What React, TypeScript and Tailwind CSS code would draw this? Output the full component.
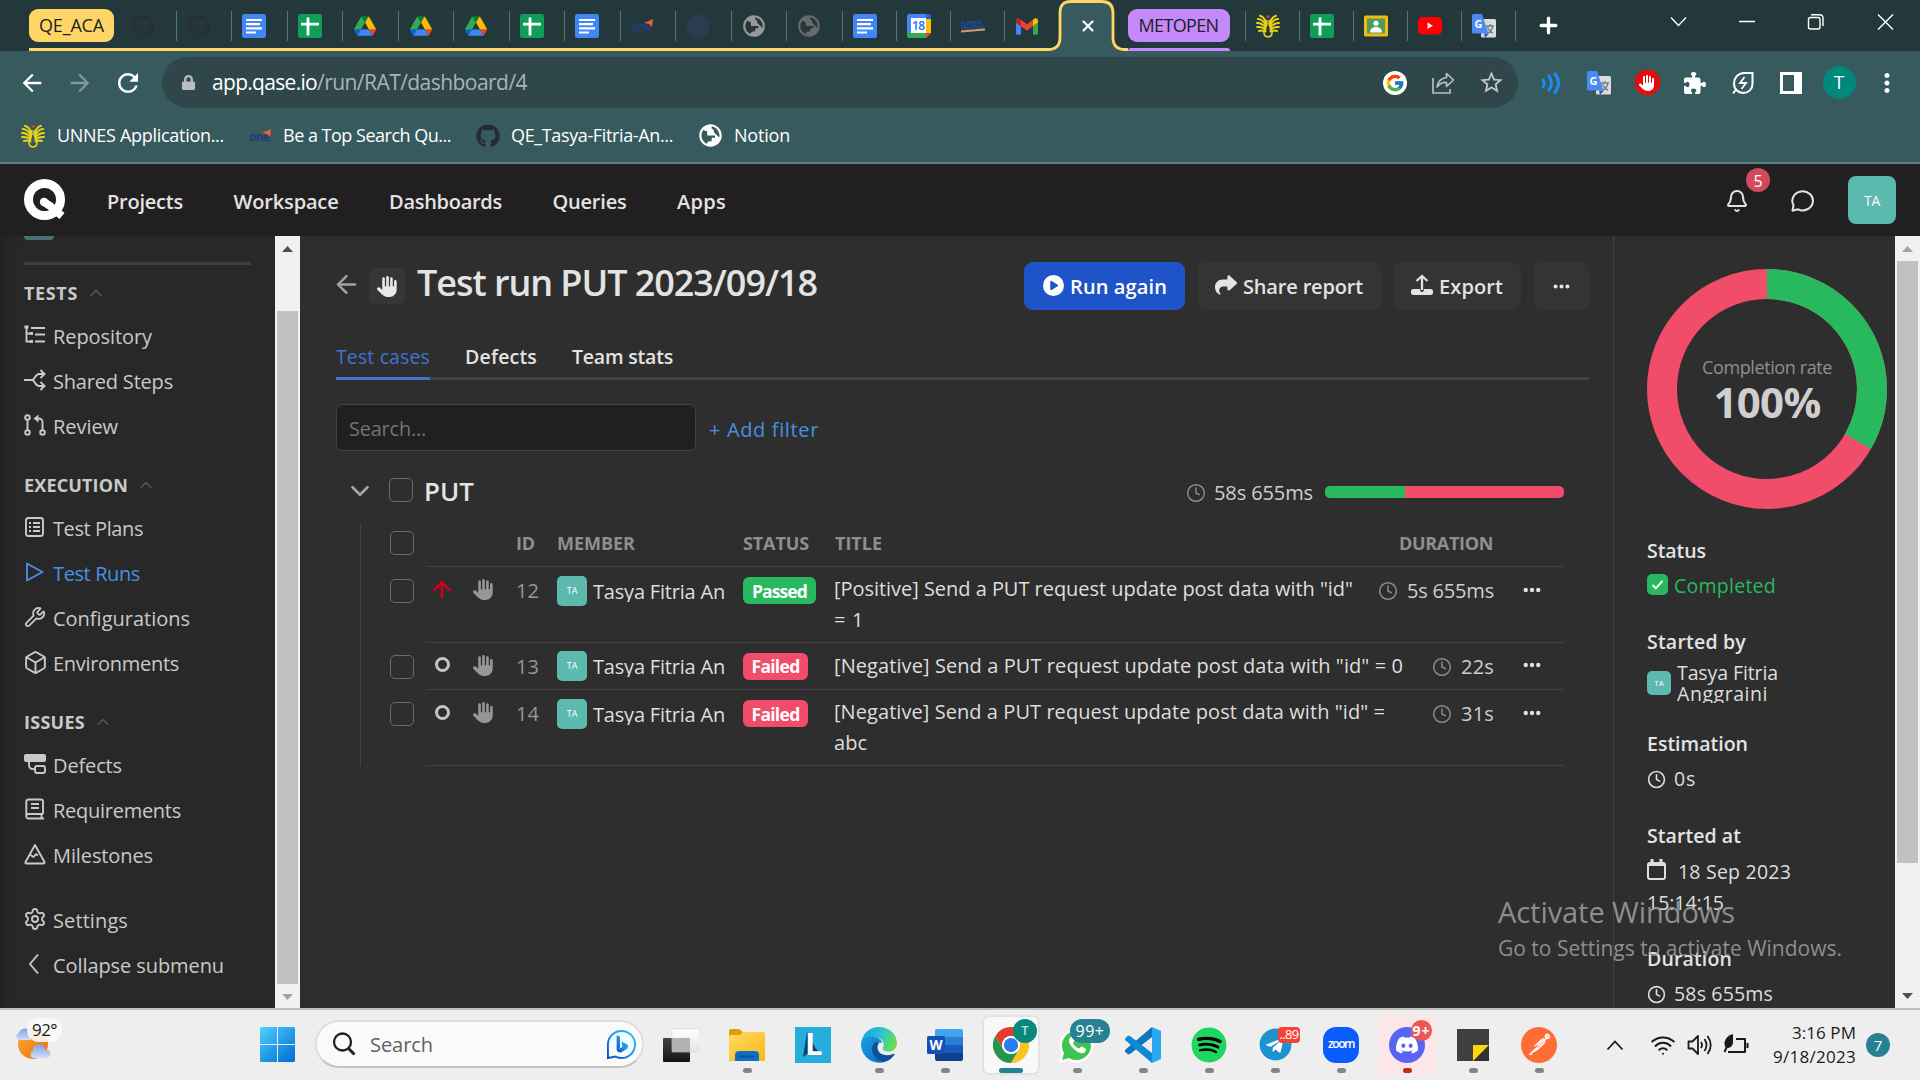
import { useLayoutEffect, useRef, type ReactNode } from "react";
import {
  FaGithub,
  FaSpotify,
  FaTelegram,
  FaDiscord,
  FaLock,
} from "react-icons/fa";
import { FaHand, FaCirclePlay, FaShare, FaPuzzlePiece, FaEllipsis } from "react-icons/fa6";
import { FcGoogle } from "react-icons/fc";
import { SiPostman } from "react-icons/si";
import { MdPublic, MdOutlineStarBorder, MdMoreVert, MdRefresh, MdArrowBack, MdArrowForward } from "react-icons/md";
import {
  ArrowLeft,
  ArrowUp,
  Bell,
  Box,
  ChevronDown,
  ChevronUp,
  Clock4,
  Plus,
  Settings,
  Wifi,
  Wrench,
  X,
} from "lucide-react";

/* Text run whose tracking is adjusted so that it fills a given width. */
function T({ w, className = "", children }: { w: number; className?: string; children: ReactNode }) {
  const ref = useRef<HTMLSpanElement>(null);
  useLayoutEffect(() => {
    const el = ref.current;
    if (!el) return;
    el.style.letterSpacing = "0px";
    const n = (el.textContent || "").length || 1;
    el.style.letterSpacing = `${(w + 1 - el.getBoundingClientRect().width) / n}px`;
  }, [w]);
  return (
    <span ref={ref} className={`inline-block whitespace-pre ${className}`}>
      {children}
    </span>
  );
}

/* ---------- browser tab icons ---------- */

const DocsIcon = () => (
  <svg viewBox="0 0 24 24" className="size-6">
    <rect width="24" height="24" rx="2.5" fill="#4285f4" />
    <path d="M4 6h16M4 10.200h14M4 14.400h16M4 18.500h10" stroke="#fff" strokeWidth="2.200" />
  </svg>
);
const SheetsIcon = () => (
  <svg viewBox="0 0 24 24" className="size-6">
    <rect width="24" height="24" rx="2.500" fill="#0f9d58" />
    <path d="M3 10.200h18M10 3.500v18" stroke="#fff" strokeWidth="2.800" />
  </svg>
);
const DriveIcon = () => (
  <svg viewBox="0 0 87.300 78" className="h-5 w-[22px]">
    <path d="m6.600 66.850 3.850 6.650c.8 1.400 1.950 2.500 3.300 3.300L27.500 53H0c0 1.550.4 3.100 1.200 4.500z" fill="#0066da" />
    <path d="M43.650 25 29.900 1.200c-1.350.8-2.500 1.900-3.300 3.300L1.200 48.500A9 9 0 0 0 0 53h27.500z" fill="#34a853" />
    <path d="M73.550 76.800c1.350-.8 2.500-1.900 3.300-3.300l1.600-2.750 7.650-13.250c.8-1.400 1.200-2.950 1.200-4.500H59.800l5.850 11.500z" fill="#ea4335" />
    <path d="M43.650 25 57.400 1.200C56.050.4 54.500 0 52.900 0H34.400c-1.600 0-3.150.45-4.500 1.200z" fill="#00832d" />
    <path d="M59.800 53H27.500L13.750 76.800c1.350.8 2.900 1.200 4.500 1.200h50.800c1.600 0 3.150-.45 4.500-1.200z" fill="#4285f4" />
    <path d="m73.400 26.500-12.700-22c-.8-1.400-1.950-2.500-3.300-3.300L43.650 25 59.800 53h27.450c0-1.550-.4-3.100-1.200-4.500z" fill="#ffba00" />
  </svg>
);
const OneIcon = ({ className = "" }: { className?: string }) => (
  <svg viewBox="0 0 24 24" className={`size-6 ${className}`}>
    <text x="0" y="17" fontSize="12" fontWeight="700" fontFamily="Open Sans" fill="#223d78" textLength="21">
      one
    </text>
    <path d="M13 9 22 5l-1 8-3-3z" fill="#e8632f" />
  </svg>
);
const DotsCircle = () => (
  <svg viewBox="0 0 24 24" className="size-6">
    <circle cx="12" cy="12" r="11.500" fill="#293d52" />
    <path d="M4 8h14M3.500 12h13M5 16h11" stroke="#3d4466" strokeWidth="1.500" strokeDasharray="1.300 2" />
  </svg>
);
const CalendarIcon = () => (
  <svg viewBox="0 0 24 24" className="size-6">
    <path d="M0 2.500A2.500 2.500 0 0 1 2.500 0h19A2.500 2.500 0 0 1 24 2.500V19l-5 5H2.500A2.500 2.500 0 0 1 0 21.500z" fill="#4285f4" />
    <path d="M19 5h5v14h-5z" fill="#fbbc04" />
    <path d="M0 19h19v5H2.500A2.500 2.500 0 0 1 0 21.500z" fill="#34a853" />
    <path d="M19 19h5l-5 5z" fill="#ea4335" />
    <path d="M19 0h2.500A2.500 2.500 0 0 1 24 2.500V5h-5z" fill="#1967d2" />
    <path d="M4 4h15v15H4z" fill="#fff" />
    <text x="11.500" y="16" fontSize="12" textAnchor="middle" fontFamily="Open Sans" fontWeight="600" fill="#1a73e8" textLength="13">
      18
    </text>
  </svg>
);
const KampusIcon = () => (
  <svg viewBox="0 0 24 24" className="size-6">
    <g transform="rotate(-4 12 12)" fill="#1c4c93" fontFamily="Open Sans" fontWeight="700" fontSize="6.500">
      <text x="0" y="10.500" textLength="22">Kampus</text>
      <text x="0" y="15.500" textLength="24">Merdeka</text>
    </g>
    <path d="m0 17.500 24-2" stroke="#d99a63" strokeWidth="1.800" />
  </svg>
);
const GmailIcon = () => (
  <svg viewBox="52 42 88 66" className="h-[17px] w-[22px]">
    <path fill="#4285f4" d="M58 108h14V74L52 59v43c0 3.320 2.690 6 6 6" />
    <path fill="#34a853" d="M120 108h14c3.320 0 6-2.690 6-6V59l-20 15" />
    <path fill="#fbbc04" d="M120 48v26l20-15v-8c0-7.420-8.470-11.650-14.400-7.200" />
    <path fill="#ea4335" d="M72 74V48l24 18 24-18v26L96 92" />
    <path fill="#c5221f" d="M52 51v8l20 15V48l-5.600-4.200c-5.940-4.450-14.400-.22-14.400 7.200" />
  </svg>
);
const UnnesIcon = () => (
  <svg viewBox="0 0 24 24" className="size-6" fill="none" stroke="#e6d219" strokeWidth="2" strokeLinecap="round">
    <path d="M10.500 9.500C9 5 6.500 2.500 4 1.800M9.800 11C7.500 7 4.500 5 1.800 5M9.500 13C6.500 10 3.500 8.800 1 9M9.500 15.200C6.500 13.200 4 12.600 1.200 13M9.500 17.500C7 16.500 5 16.300 3 17M13.500 9.500C15 5 17.500 2.500 20 1.800M14.200 11C16.500 7 19.500 5 22.200 5M14.500 13c3-3 6-4.200 8.500-4M14.500 15.200c3-2 5.500-2.600 8.300-2.200M14.500 17.500c2.500-1 4.500-1.200 6.500-.5" />
    <path d="M10.800 6.500v4L8 18q-.5 4.500 4 5 4.500-.5 4-5l-2.800-7.500v-4" strokeWidth="1.600" />
    <circle cx="12" cy="2.500" r="1.500" fill="#e23b2e" stroke="none" />
  </svg>
);
const ClassroomIcon = () => (
  <svg viewBox="0 0 24 24" className="size-6">
    <rect y="1.500" width="24" height="21" rx="1.500" fill="#f4b915" />
    <rect x="3" y="4.500" width="18" height="15" fill="#4a9f5b" />
    <circle cx="12" cy="9.300" r="2.600" fill="#fff" />
    <path d="M6 18.500c0-4 3-5.500 6-5.500s6 1.500 6 5.500z" fill="#fff" />
  </svg>
);
const YoutubeIcon = () => (
  <svg viewBox="0 0 24 18" className="h-[18px] w-6">
    <rect width="24" height="17.500" rx="4.500" fill="#f00" />
    <path d="M9.500 5.500v6.500l5.500-3.200z" fill="#fff" />
  </svg>
);
const TranslateIcon = () => (
  <svg viewBox="0 0 24 24" className="size-6">
    <rect x="9" y="5" width="15" height="18.500" rx="1.500" fill="#dcdcdc" />
    <path d="M14 12h8M18 10v2m3 0c-1 4-3 6-5.500 7.500M15.500 13c1 3 3 5 5.500 6" stroke="#6f7f86" strokeWidth="1.400" fill="none" />
    <path d="M12 19.500h5L13 24z" fill="#3a52c4" />
    <path d="M1.500 0H10l6.500 19.500H1.500A1.500 1.500 0 0 1 0 18V1.500A1.500 1.500 0 0 1 1.500 0" fill="#4a8af4" />
    <text x="2.500" y="13.500" fontSize="11" fontFamily="Open Sans" fontWeight="700" fill="#fff">
      G
    </text>
  </svg>
);

/* ---------- browser chrome ---------- */

const wideTabs: ReactNode[] = [
  <FaGithub className="size-6 text-[#292f38]" />,
  <FaGithub className="size-6 text-[#292f38]" />,
  <DocsIcon />,
  <SheetsIcon />,
  <DriveIcon />,
  <DriveIcon />,
  <DriveIcon />,
  <SheetsIcon />,
  <DocsIcon />,
  <OneIcon />,
  <DotsCircle />,
  <MdPublic className="size-[26px] rotate-180 text-[#989898]" />,
  <MdPublic className="size-[26px] rotate-180 text-[#68696c]" />,
];
const midTabs: ReactNode[] = [<DocsIcon />, <CalendarIcon />, <KampusIcon />];
const endTabs: ReactNode[] = [<UnnesIcon />, <SheetsIcon />, <ClassroomIcon />, <YoutubeIcon />, <TranslateIcon />];

function TabStrip() {
  return (
    <div className="relative flex h-[51px] bg-[#22383a] text-[18px] text-[#202124]">
      <div className="ml-[29px] mt-[9px] flex h-[33px] w-[85px] items-center justify-center rounded-[9px] bg-[#ffd666]">
        <T w={64}>QE_ACA</T>
      </div>
      <div className="ml-[7px] mt-[11px] flex h-[30px]">
        {wideTabs.map((icon, i) => (
          <div key={i} className="flex w-[55.500px] items-center justify-center border-r border-[#5d6f70] pr-[10px]">
            {icon}
          </div>
        ))}
        {midTabs.map((icon, i) => (
          <div key={i} className="flex w-[54px] items-center justify-center border-r border-[#5d6f70] pr-[8px]">
            {icon}
          </div>
        ))}
        <div className="flex w-[54px] items-center justify-center pr-[9px]">
          <GmailIcon />
        </div>
      </div>
      <div className="absolute left-[29px] top-[48px] h-[3px] w-[1012px] bg-[#ffd666]" />
      <svg className="absolute left-[1040px] top-0" width="90" height="51" viewBox="0 0 90 51">
        <path d="M0 49.500h8q12 0 12-12V13q0-11.500 11-11.500h31q11 0 11 11.500v24.500q0 12 12 12h3V54H0z" fill="#365a5d" />
        <path d="M0 49.500h8q12 0 12-12V13q0-11.500 11-11.500h31q11 0 11 11.500v24.500q0 12 12 12h3" fill="none" stroke="#ffd666" strokeWidth="2.800" />
      </svg>
      <div className="relative flex w-[69px] items-center justify-center pr-[10px]">
        <X className="size-[18px] text-white" strokeWidth={2.800} />
      </div>
      <div className="relative mt-[9px] w-[102px]">
        <div className="flex h-[33px] items-center justify-center rounded-[9px] bg-[#c58af9]">
          <T w={79}>METOPEN</T>
        </div>
        <div className="mt-[6px] h-[3px] rounded-t-sm bg-[#c58af9]" />
      </div>
      <div className="ml-[15px] mt-[11px] flex h-[30px] border-l border-[#5d6f70]">
        {endTabs.map((icon, i) => (
          <div key={i} className="flex w-[54px] items-center justify-center border-r border-[#5d6f70] pr-[8px]">
            {icon}
          </div>
        ))}
      </div>
      <Plus className="ml-[20px] mt-[13px] size-[25px] text-white" strokeWidth={3.200} />
      <div className="ml-auto flex items-start pt-[11px] text-white">
        <svg width="48" height="22" fill="none" stroke="currentColor" strokeWidth="1.300" className="mr-[21px]">
          <path d="m17 6.500 7.500 8 7.500-8" />
        </svg>
        <svg width="48" height="22" fill="none" stroke="currentColor" strokeWidth="1.500" className="mr-[21px]">
          <path d="M16 10.500h16" />
        </svg>
        <svg width="48" height="22" fill="none" stroke="currentColor" strokeWidth="1.400" className="mr-[21px]">
          <rect x="16.500" y="6.500" width="11.500" height="11.500" rx="2" />
          <path d="M19 3.700h8.500q3.500 0 3.500 3.500V15" />
        </svg>
        <svg width="48" height="22" fill="none" stroke="currentColor" strokeWidth="1.400" className="mr-[11px]">
          <path d="m17 3.500 15 15m0-15-15 15" />
        </svg>
      </div>
    </div>
  );
}

function Toolbar() {
  const cell = "flex w-12 shrink-0 items-center justify-center";
  return (
    <div className="flex h-[63px] items-center bg-[#365a5d] text-white">
      <div className={`${cell} ml-[8px]`}>
        <MdArrowBack className="size-[28px]" />
      </div>
      <div className={cell}>
        <MdArrowForward className="size-[28px] text-[#82989a]" />
      </div>
      <div className={`${cell} mr-[10px]`}>
        <MdRefresh className="size-[30px]" />
      </div>
      <div className="flex h-[51px] flex-1 items-center rounded-full bg-[#2f474b] pr-[3px]">
        <FaLock className="ml-[19px] size-[15px] text-[#b8bdc3]" />
        <div className="ml-[16px] flex-1 text-[21px]">
          <T w={104}>app.qase.io</T>
          <T w={209} className="text-[#a9b4b6]">/run/RAT/dashboard/4</T>
        </div>
        <div className={cell}>
          <span className="flex size-6 items-center justify-center rounded-full bg-white">
            <FcGoogle className="size-5" />
          </span>
        </div>
        <div className={cell}>
          <svg viewBox="0 0 24 24" className="size-6" fill="none" stroke="#b8bfc0" strokeWidth="1.700">
            <path d="M2 7v15h17v-4" />
            <path d="M15.500 2.500 22.500 9l-7 6.500v-4Q10 11 6 16q1.500-8.500 9.500-9.500z" strokeLinejoin="round" />
          </svg>
        </div>
        <div className={cell}>
          <MdOutlineStarBorder className="size-[27px] text-[#c4c7c8]" />
        </div>
      </div>
      <div className="ml-[9px] mr-[9px] flex">
        <div className={cell}>
          <svg viewBox="0 0 24 24" className="size-6" fill="none" stroke="#1a8cf5" strokeWidth="3" strokeLinecap="round">
            <path d="M4 9q2.500 3.500 0 7M10 5q5 7.500 0 14M16 3q7 9 0 18.500" />
          </svg>
        </div>
        <div className={cell}>
          <TranslateIcon />
        </div>
        <div className={`${cell} relative`}>
          <svg viewBox="0 0 24 24" className="size-[25px]">
            <path d="M7 0h10l7 7v10l-7 7H7l-7-7V7z" fill="#e50c0c" />
          </svg>
          <FaHand className="absolute left-[16px] size-[16px]" />
        </div>
        <div className={cell}>
          <FaPuzzlePiece className="size-[22px]" />
        </div>
        <div className={cell}>
          <svg viewBox="0 0 24 24" className="size-6" fill="none" stroke="currentColor" strokeWidth="2">
            <path d="M21.500 2v11a9 9 0 0 1-9 9C7 22 3 18 3 12.500S7 2 13 2zM5.500 18 2 22.500" />
            <path d="m13.500 6-4.500 6h6l-4.500 6" strokeWidth="1.800" />
          </svg>
        </div>
        <div className={cell}>
          <svg viewBox="0 0 22 22" className="size-[22px]">
            <path d="M0 0h22v22H0zm3 3v16h11V3z" fill="#fff" fillRule="evenodd" />
          </svg>
        </div>
        <div className={cell}>
          <span className="flex size-[33px] items-center justify-center rounded-full bg-[#00897b] text-[19px]">T</span>
        </div>
        <div className={cell}>
          <MdMoreVert className="size-[30px]" />
        </div>
      </div>
    </div>
  );
}

function Bookmarks() {
  return (
    <div className="flex h-[50px] items-center border-b-2 border-[#5d7b7e] bg-[#365a5d] pb-[7px] pl-[21px] pt-[2px] text-[18px] text-white">
      <UnnesIcon />
      <T w={166} className="ml-[12px]">UNNES Application...</T>
      <OneIcon className="ml-[25px]" />
      <T w={167} className="ml-[10px]">Be a Top Search Qu...</T>
      <FaGithub className="ml-[25px] size-6 text-[#252b34]" />
      <T w={161} className="ml-[11px]">QE_Tasya-Fitria-An...</T>
      <MdPublic className="ml-[24px] size-[27px] rotate-180" />
      <T w={55} className="ml-[10px]">Notion</T>
    </div>
  );
}

/* ---------- Qase application ---------- */

const nav: [string, number][] = [
  ["Projects", 75],
  ["Workspace", 104],
  ["Dashboards", 112],
  ["Queries", 73],
  ["Apps", 48],
];

function AppHeader() {
  return (
    <div className="flex h-[72px] items-center bg-[#221f21] text-[#e3e3e3]">
      <svg viewBox="0 0 42 42" className="ml-[24px] size-[42px]" fill="none" stroke="#fff">
        <ellipse cx="20.500" cy="20.500" rx="16" ry="16" strokeWidth="9" />
        <path d="m20 23 6 4 12 10" strokeWidth="8" />
        <circle cx="20" cy="23" r="4.200" fill="#fff" stroke="none" />
      </svg>
      <div className="ml-[41px] flex gap-[50.500px] pt-[3px] text-[20px] font-semibold">
        {nav.map(([label, w]) => (
          <T key={label} w={w}>{label}</T>
        ))}
      </div>
      <div className="ml-auto mr-[24px] flex items-center">
        <div className="relative">
          <Bell className="mt-[2px] size-6" strokeWidth={2} />
          <span className="absolute -top-[19px] left-[21px] flex size-6 items-center justify-center rounded-full bg-[#d04a5e] pt-px text-[16px] text-white">
            5
          </span>
        </div>
        <svg viewBox="0 0 24 24" className="ml-[42px] mt-[2px] size-6" fill="none" stroke="currentColor" strokeWidth="2" strokeLinejoin="round">
          <path d="M2.500 16.200A10.300 9.500 0 1 1 7 20.300L1.500 21.800z" />
        </svg>
        <div className="ml-[33px] flex size-12 items-center justify-center rounded-[8px] bg-[#5bb9ad] text-[14px] text-white">
          <T w={15}>TA</T>
        </div>
      </div>
    </div>
  );
}

const svgProps = {
  viewBox: "0 0 22 22",
  className: "size-[22px]",
  fill: "none",
  stroke: "currentColor",
  strokeWidth: 1.9,
} as const;

const RepoIcon = () => (
  <svg {...svgProps}>
    <path d="M2.500 2v15.500H7M2.500 9.500H7M7 4h14M11 10.500h10M11 17.500h10" />
    <path d="M.5 3h4M6 9.500h3M6 17.500h3" strokeWidth="3" />
  </svg>
);
const SharedIcon = () => (
  <svg {...svgProps}>
    <path d="M0 11h8c3 0 3-6 7-6h5M8 11c3 0 3 6 7 6h5M16.500 1l4 4-4 4M16.500 13l4 4-4 4" />
  </svg>
);
const ReviewIcon = () => (
  <svg {...svgProps}>
    <circle cx="3.500" cy="3.500" r="2.300" />
    <circle cx="3.500" cy="18.500" r="2.300" />
    <circle cx="18.500" cy="18.500" r="2.300" />
    <path d="M3.500 6v10M18.500 16V8q0-3.500-4-3.500H12" />
    <path d="m14.500.5-5 4 5 4z" fill="currentColor" stroke="none" />
  </svg>
);
const PlansIcon = () => (
  <svg {...svgProps}>
    <rect x="2" y="2" width="17" height="18" rx="2.500" />
    <path d="M9 7h7M9 11h7M9 15h7M5 7h2M5 11h2M5 15h2" />
  </svg>
);
const RunsIcon = () => (
  <svg {...svgProps}>
    <path d="M3 2.500v17L18.500 11z" strokeLinejoin="round" />
  </svg>
);
const DefectsIcon = () => (
  <svg {...svgProps}>
    <rect x="0" y="1" width="22" height="8" rx="2" fill="currentColor" stroke="none" />
    <path d="M5 8v4q0 4 4 4h2" />
    <rect x="11" y="13" width="10" height="7" rx="2" />
  </svg>
);
const ReqIcon = () => (
  <svg {...svgProps}>
    <path d="M19 16H4.500a2.200 2.200 0 0 0 0 4.500H20M2.300 18V3.500Q2.300 1.500 4.500 1.500H17q2 0 2 2V16M17.500 16v4.500M7 6h8M7 10h8" />
  </svg>
);
const MilestoneIcon = () => (
  <svg {...svgProps}>
    <path d="M11 2 1.500 19q-.3 1.500 1 1.500h17q1.300 0 1-1.500zM6.500 12l3 2 2.500-3 2 1.500" strokeLinejoin="round" />
  </svg>
);

type Item = { label: string; w: number; icon: ReactNode; active?: boolean };

function NavItem({ label, w, icon, active }: Item) {
  return (
    <div className={`flex h-[45px] items-center gap-[7px] text-[20px] ${active ? "text-[#4a90e2]" : "text-[#c9c9c9]"}`}>
      <span className="mb-[3px] flex w-[22px] justify-center">{icon}</span>
      <T w={w}>{label}</T>
    </div>
  );
}

function Heading({ label, w, className }: { label: string; w: number; className: string }) {
  return (
    <div className={`flex h-[30px] items-center gap-[8px] text-[18px] font-bold text-[#c9c9c9] ${className}`}>
      <T w={w} className="pt-px">{label}</T>
      <ChevronUp className="size-[20px] text-[#5a5a5a]" strokeWidth={1.500} />
    </div>
  );
}

function Sidebar() {
  return (
    <div className="flex w-[275px] flex-col bg-[#282828] pl-[24px] shadow-[inset_10px_0_16px_-8px_rgba(0,0,0,0.25)]">
      <div className="h-1 w-[30px] rounded-b bg-[#477175]" />
      <div className="mt-[22px] h-[3px] w-[227px] shrink-0 bg-[#3e3e3e]" />
      <Heading label="TESTS" w={53} className="mt-[13px]" />
      <div className="mt-[6px]">
        <NavItem label="Repository" w={98} icon={<RepoIcon />} />
        <NavItem label="Shared Steps" w={119} icon={<SharedIcon />} />
        <NavItem label="Review" w={64} icon={<ReviewIcon />} />
      </div>
      <Heading label="EXECUTION" w={103} className="mt-[21px]" />
      <div className="mt-[6px]">
        <NavItem label="Test Plans" w={89} icon={<PlansIcon />} />
        <NavItem label="Test Runs" w={86} icon={<RunsIcon />} active />
        <NavItem label="Configurations" w={136} icon={<Wrench className="size-[22px] -scale-x-100 rotate-90" strokeWidth={1.900} />} />
        <NavItem label="Environments" w={125} icon={<Box className="size-[25px] shrink-0" strokeWidth={1.800} />} />
      </div>
      <Heading label="ISSUES" w={60} className="mt-[21px]" />
      <div className="mt-[6px]">
        <NavItem label="Defects" w={68} icon={<DefectsIcon />} />
        <NavItem label="Requirements" w={127} icon={<ReqIcon />} />
        <NavItem label="Milestones" w={99} icon={<MilestoneIcon />} />
      </div>
      <div className="mt-[20px]">
        <NavItem label="Settings" w={74} icon={<Settings className="size-[24px] shrink-0" strokeWidth={1.900} />} />
        <NavItem label="Collapse submenu" w={170} icon={<svg {...svgProps}><path d="m14 1.500-8 9.500 8 9.500" /></svg>} />
      </div>
    </div>
  );
}

function Scrollbar({ before, thumb, up, down }: { before: string; thumb: string; up: string; down: string }) {
  return (
    <div className="flex h-full w-[25px] shrink-0 flex-col items-center bg-[#f1f1f1]">
      <svg width="25" height="25" className="shrink-0">
        <path d="M7 16h11l-5.500-6z" className={up} />
      </svg>
      <div className={`shrink-0 ${before}`} />
      <div className={`w-[21px] shrink-0 bg-[#c1c1c1] ${thumb}`} />
      <svg width="25" height="25" className="mt-auto shrink-0">
        <path d="M7 10h11l-5.500 6z" className={down} />
      </svg>
    </div>
  );
}

const Check = () => <span className="size-6 shrink-0 rounded-[5px] border border-[#6a6a72]" />;

type Row = {
  id: string;
  passed?: boolean;
  lines: [string, number][];
  duration: string;
  dw: number;
  height: string;
};

const rows: Row[] = [
  {
    id: "12",
    passed: true,
    lines: [['[Positive] Send a PUT request update post data with "id"', 518], ["= 1", 29]],
    duration: "5s 655ms",
    dw: 86,
    height: "h-[75.500px]",
  },
  {
    id: "13",
    lines: [['[Negative] Send a PUT request update post data with "id" = 0', 568]],
    duration: "22s",
    dw: 32,
    height: "h-[47.500px]",
  },
  {
    id: "14",
    lines: [['[Negative] Send a PUT request update post data with "id" =', 550], ["abc", 32]],
    duration: "31s",
    dw: 32,
    height: "h-[75.500px]",
  },
];

function CaseRow({ row }: { row: Row }) {
  const multi = row.lines.length > 1;
  return (
    <div className={`flex ${row.height}`}>
      <div className="flex h-[48px] w-[65px] items-center pl-[29px]">
        <Check />
      </div>
      <div className="flex flex-1 items-start border-b border-[#424242] text-[20px] text-[#dedede]">
        <div className="flex h-[48px] w-[32px] items-center justify-center">
          {row.passed ? (
            <ArrowUp className="mb-[3px] size-[26px] text-[#d0021b]" strokeWidth={2.300} />
          ) : (
            <span className="mb-[4px] size-[15px] rounded-full border-[3px] border-[#c4c4c4]" />
          )}
        </div>
        <div className="flex h-[48px] w-[52px] items-center justify-center">
          <FaHand className="mb-[3px] mr-[2px] size-[21px] text-[#969696]" />
        </div>
        <div className="flex h-[48px] w-[47px] items-center pl-[6px] text-[#969696]">
          <T w={22}>{row.id}</T>
        </div>
        <div className="flex h-[48px] w-[185px] items-center gap-[6px]">
          <span className="mb-px flex size-[30px] items-center justify-center rounded-[5px] bg-[#5bb9ad] text-[9px] text-white">TA</span>
          <span className="h-[21px] overflow-hidden leading-[21px]">
            <T w={131}>Tasya Fitria An</T>
          </span>
        </div>
        <div className="flex h-[48px] w-[92px] items-center pl-px text-[17.500px] font-bold text-white">
          <span
            className={`mb-px flex h-[27px] items-center justify-center rounded-[6px] pt-px ${
              row.passed ? "w-[73px] bg-[#28b95f]" : "w-[65px] bg-[#f14c6a]"
            }`}
          >
            <T w={row.passed ? 54 : 47}>{row.passed ? "Passed" : "Failed"}</T>
          </span>
        </div>
        <div className={`flex flex-1 flex-col items-start leading-[30.500px] ${multi ? "pt-[7px]" : "pt-[8px]"}`}>
          {row.lines.map(([line, w]) => (
            <span key={line} className="block h-[30.500px]">
              <T w={w}>{line}</T>
            </span>
          ))}
        </div>
        <div className="flex h-[48px] items-center text-[#cfcfcf]">
          <Clock4 className="mr-[9px] size-[20px] text-[#8b8b8b]" strokeWidth={1.800} />
          <T w={row.dw}>{row.duration}</T>
        </div>
        <div className="flex h-[48px] w-[70px] items-center pl-[28px]">
          <FaEllipsis className="mb-[3px] size-[20px] text-[#e0e0e0]" />
        </div>
      </div>
    </div>
  );
}

function Main() {
  const btn = "flex h-12 items-center rounded-[9px] bg-[#343434] text-[#e3e3e3]";
  return (
    <div className="flex min-w-0 flex-1 flex-col bg-[#2e2e2e] pl-[36px] pr-[24px] pt-[26px]">
      <div className="flex h-12 items-center">
        <ArrowLeft className="mb-[4px] -ml-[4px] size-[29px] text-[#a3a3a3]" strokeWidth={2} />
        <span className="ml-[8px] flex size-9 items-center justify-center rounded-[6px] bg-[#363636]">
          <FaHand className="size-[21px] text-[#e8e8e8]" />
        </span>
        <T w={399} className="ml-[12px] pb-[6px] text-[36px] font-semibold leading-[44px] text-[#e3e3e3]">
          Test run PUT 2023/09/18
        </T>
        <div className="ml-auto flex gap-3 text-[20px] font-semibold">
          <div className="flex h-12 w-[161px] items-center rounded-[9px] bg-[#1f54c9] pl-[19px] text-white">
            <FaCirclePlay className="mb-[2px] mr-[6px] size-[21px]" />
            <T w={96} className="pt-px">Run again</T>
          </div>
          <div className={`${btn} w-[184px] pl-[18px]`}>
            <FaShare className="mb-[2px] mr-[6px] size-[22px]" />
            <T w={119} className="pt-px">Share report</T>
          </div>
          <div className={`${btn} w-[128px] pl-[18px]`}>
            <svg viewBox="0 0 22 22" className="mb-[2px] mr-[6px] size-[22px]" fill="none" stroke="currentColor" strokeWidth="2.300">
              <path d="M11 16V2.500M5.500 7 11 2l5.500 5" />
              <path d="M0 17.500Q0 15 2.500 15H9q0 3 2 3t2-3h6.500q2.500 0 2.500 2.500v1q0 2.500-2.500 2.500h-17Q0 21 0 18.500z" fill="currentColor" stroke="none" />
            </svg>
            <T w={63} className="pt-px">Export</T>
          </div>
          <div className={`${btn} w-[56px] justify-center`}>
            <FaEllipsis className="size-[19px]" />
          </div>
        </div>
      </div>

      <div className="mt-[25px] flex h-[45px] gap-[35px] border-b-[3px] border-[#434343] text-[19.500px] font-semibold leading-[43px] text-[#e3e3e3]">
        <div className="h-[45px] border-b-[3px] border-[#3f74d0] font-medium text-[#3f74d0]">
          <T w={93}>Test cases</T>
        </div>
        <T w={71}>Defects</T>
        <T w={100}>Team stats</T>
      </div>

      <div className="mt-[24px] flex h-[47px] items-center text-[20px]">
        <div className="flex h-full w-[360px] items-center rounded-[6px] border border-[#434343] bg-[#221f21] pl-[12px] pt-[3px] text-[#6d757c]">
          <T w={76}>Search...</T>
        </div>
        <T w={109} className="ml-[13px] pt-[4px] font-medium text-[#4a90e2]">+ Add filter</T>
      </div>

      <div className="mt-[15px] flex h-[50px] items-center pr-[25px]">
        <ChevronDown className="ml-[9px] size-[30px] text-[#a3a3a3]" strokeWidth={2.200} />
        <span className="mb-[2px] ml-[14px] flex">
          <Check />
        </span>
        <T w={49} className="ml-[11px] text-[26px] font-semibold text-[#e3e3e3]">PUT</T>
        <Clock4 className="ml-auto mt-[4px] size-[20px] text-[#8b8b8b]" strokeWidth={1.800} />
        <T w={98} className="ml-[8px] mt-[4px] text-[20px] text-[#cfcfcf]">58s 655ms</T>
        <div className="ml-[12px] mt-[2px] flex h-3 w-[239px] overflow-hidden rounded-[5px] bg-[#f14c6a]">
          <div className="w-1/3 bg-[#28b95f]" />
        </div>
      </div>

      <div className="ml-[24px] mr-[25px] mt-[7px] border-l border-[#424242]">
        <div className="flex h-[44px]">
          <div className="flex w-[65px] items-center pb-[4px] pl-[29px]">
            <Check />
          </div>
          <div className="flex flex-1 items-center border-b border-[#424242] pb-[3px] text-[18px] font-bold text-[#8f8f8f]">
            <T w={18} className="ml-[90px]">ID</T>
            <T w={77} className="ml-[22px]">MEMBER</T>
            <T w={65} className="ml-[108px]">STATUS</T>
            <T w={46} className="ml-[26px]">TITLE</T>
            <T w={93} className="ml-auto mr-[71px]">DURATION</T>
          </div>
        </div>
        {rows.map((row) => (
          <CaseRow key={row.id} row={row} />
        ))}
      </div>
    </div>
  );
}

function Details() {
  const head = "h-[30px] font-semibold leading-[31px] text-[#e3e3e3]";
  return (
    <div className="w-[282px] shrink-0 overflow-hidden border-l border-[#434343] bg-[#2e2e2e] pl-[33px] pt-[33px] text-[19.500px] text-[#dedede]">
      <div className="relative size-[240px]">
        <svg viewBox="0 0 240 240" className="size-[240px]" fill="none" strokeWidth="30">
          <circle cx="120" cy="120" r="105" stroke="#f14c6a" />
          <circle cx="120" cy="120" r="105" stroke="#28b95f" pathLength="3" strokeDasharray="1 2" transform="rotate(-90 120 120)" />
        </svg>
        <div className="absolute inset-0 flex flex-col items-center pt-[86px]">
          <T w={129} className="text-[18px] leading-[25px] text-[#8f8f8f]">Completion rate</T>
          <T w={106} className="text-[42px] font-bold leading-[44px] text-[#cfcfcf]">100%</T>
        </div>
      </div>
      <div className={`mt-[26px] ${head}`}>
        <T w={58}>Status</T>
      </div>
      <div className="mt-[6px] flex h-[30px] items-center text-[#28b95f]">
        <span className="mb-[3px] mr-[6px] flex size-[21px] items-center justify-center rounded-[5px] bg-[#28b95f]">
          <svg viewBox="0 0 14 12" className="h-[10px] w-[13px]" fill="none" stroke="#fff" strokeWidth="2.300">
            <path d="m1 6 4 4 8-9" />
          </svg>
        </span>
        <T w={101}>Completed</T>
      </div>
      <div className={`mt-[25px] ${head}`}>
        <T w={98}>Started by</T>
      </div>
      <div className="mt-[6px] flex items-center gap-[6px]">
        <span className="flex size-6 items-center justify-center rounded-[5px] bg-[#5bb9ad] text-[8px] text-white">TA</span>
        <div className="flex h-[41px] flex-col items-start overflow-hidden leading-[21px]">
          <T w={100}>Tasya Fitria</T>
          <T w={90}>Anggraini</T>
        </div>
      </div>
      <div className={`mt-[25px] ${head}`}>
        <T w={100}>Estimation</T>
      </div>
      <div className="mt-[6px] flex h-[30px] items-center">
        <Clock4 className="mr-[8px] size-[19px]" strokeWidth={2} />
        <T w={21}>0s</T>
      </div>
      <div className={`mt-[26px] ${head}`}>
        <T w={93}>Started at</T>
      </div>
      <div className="mt-[6px] leading-[31px]">
        <div className="flex h-[31px] items-center">
          <svg viewBox="0 0 19 21" className="mb-[4px] mr-[12px] h-[21px] w-[19px]" fill="none" stroke="currentColor" strokeWidth="2">
            <rect x="1" y="4" width="17" height="16" rx="2" />
            <path d="M1 5.500h17M5 0v4M14 0v4" strokeWidth="3" />
          </svg>
          <T w={112}>18 Sep 2023</T>
        </div>
        <div className="h-[31px]">
          <T w={76}>15:14:15</T>
        </div>
      </div>
      <div className={`mt-[25px] ${head}`}>
        <T w={84}>Duration</T>
      </div>
      <div className="mt-[6px] flex h-[30px] items-center">
        <Clock4 className="mr-[8px] size-[19px]" strokeWidth={2} />
        <T w={98}>58s 655ms</T>
      </div>
    </div>
  );
}

/* ---------- Windows taskbar ---------- */

const TaskView = () => (
  <svg viewBox="0 0 36 36" className="size-9">
    <defs>
      <linearGradient id="tvDark" x1="0" y1="0" x2="0" y2="1">
        <stop stopColor="#434343" />
        <stop offset="1" stopColor="#141414" />
      </linearGradient>
      <linearGradient id="tvLight" x1="0" y1="0" x2="0" y2="1">
        <stop stopColor="#fff" />
        <stop offset="1" stopColor="#e4e4e4" />
      </linearGradient>
    </defs>
    <rect x="0" y="11" width="27" height="24" rx="1" fill="url(#tvDark)" />
    <rect x="9" y="2" width="27" height="23" rx="1" fill="url(#tvLight)" stroke="#d8d8d8" strokeWidth=".6" />
    <path d="M9 11h18v14H9z" fill="#b2b2b2" />
  </svg>
);
const Folder = () => (
  <svg viewBox="0 0 36 36" className="size-9">
    <defs>
      <linearGradient id="fold" x1="0" y1="0" x2="1" y2="1">
        <stop stopColor="#ffd964" />
        <stop offset="1" stopColor="#fdb813" />
      </linearGradient>
    </defs>
    <path d="M0 4q0-2 2-2h8l5 4v6H0z" fill="#e09c0a" />
    <path d="M0 10q0-2 2-2h9l3-3h20q2 0 2 2v27H0z" fill="url(#fold)" />
    <path d="M6 34v-6q0-4 4-4h16q4 0 4 4v6z" fill="#0f6fc4" />
    <path d="M10.500 29.500h14" stroke="#0a4f97" strokeWidth="2" />
  </svg>
);
const LApp = () => (
  <svg viewBox="0 0 36 36" className="size-9">
    <path d="M0 0h36v36H0z" fill="#25aedb" />
    <path d="M12 5 8 30l4-3h15l-6-5z" fill="#123f6c" />
    <text x="10" y="27.500" fontSize="31" fontFamily="Open Sans" fontWeight="700" fill="#fff">
      L
    </text>
  </svg>
);
const Edge = () => (
  <svg viewBox="0 0 36 36" className="size-9">
    <defs>
      <linearGradient id="edgeTop" x1="0" y1=".3" x2="1" y2=".6">
        <stop stopColor="#1d9ee0" />
        <stop offset=".5" stopColor="#2cc3d6" />
        <stop offset="1" stopColor="#6be04a" />
      </linearGradient>
      <linearGradient id="edgeLeft" x1="0" y1="0" x2="1" y2="1">
        <stop stopColor="#1b9de2" />
        <stop offset="1" stopColor="#0b6cc0" />
      </linearGradient>
    </defs>
    <path d="M0 17C1 7 8 0 18 0c11 0 18 8 18 16 0 6-4 8.500-8 8.500-5 0-7-2-6-4 2-3 0-8-5-9.500C10 9 2 12 0 17" fill="url(#edgeTop)" />
    <path d="M0 17C1 11 8 8 14 10c4 1 7 4 7 6-6-2-8 6-4 12 3 4 6 6 8 6.500C12 39 0 30 0 17" fill="url(#edgeLeft)" />
    <path d="M14.500 15C8 20 11 32 22 34.500c5 .5 9-3 11.500-7 0-1-.5-1-1.500-.5-7 3-14 0-15-4-1-3-.5-5 1-7z" fill="#0f4f9c" />
  </svg>
);
const Word = () => (
  <svg viewBox="0 0 36 36" className="size-9">
    <path d="M8 4q0-2 2-2h24q2 0 2 2v6H8z" fill="#41a5ee" />
    <path d="M8 10h28v8H8z" fill="#2b7cd3" />
    <path d="M8 18h28v8H8z" fill="#185abd" />
    <path d="M8 26h28v6q0 2-2 2H10q-2 0-2-2z" fill="#103f91" />
    <rect x="0" y="9" width="18" height="18" rx="1.500" fill="#1550b5" />
    <text x="9" y="23" fontSize="13.500" textAnchor="middle" fontFamily="Open Sans" fontWeight="700" fill="#fff">
      W
    </text>
  </svg>
);
const Chrome = () => (
  <svg viewBox="0 0 48 48" className="size-9">
    <path d="M24 12h20.800A24 24 0 0 0 3.200 12l10.400 18A12 12 0 0 1 24 12" fill="#e33b2e" />
    <path d="M44.800 12H24a12 12 0 0 1 10.400 18L24 48a24 24 0 0 0 20.800-36" fill="#fcc31e" />
    <path d="M3.200 12A24 24 0 0 0 24 48l10.400-18a12 12 0 0 1-20.800 0z" fill="#249848" />
    <circle cx="24" cy="24" r="12" fill="#fff" />
    <circle cx="24" cy="24" r="9.500" fill="#2f7bee" />
  </svg>
);
const WhatsApp = () => (
  <svg viewBox="0 0 36 36" className="size-9">
    <path d="M0 36 2.500 27A17 17 0 1 1 9 33.500z" fill="#fff" />
    <path d="M3 33l2-7A14.500 14.500 0 1 1 10 31z" fill="#3fc351" />
    <path d="M12 10c-3 2-2.500 6 1 10s8 7 11.500 6c2.500-1 3-3.500 2-4.500l-4-2-2.500 2c-3-1-5-3-6-5.500l1.500-2-1.500-4z" fill="#fff" />
  </svg>
);
const VsCode = () => (
  <svg viewBox="0 0 36 36" className="size-9">
    <path d="m27 0 9 4v28l-9 4z" fill="#2aa8f2" />
    <path d="M27 0v10L5 27l-2 .5-3-3V23z" fill="#0b77bd" />
    <path d="M27 36V26L5 9l-2-.5-3 3V13z" fill="#0c8ad6" />
  </svg>
);
const Spotify = () => (
  <span className="flex size-[34px] items-center justify-center rounded-full bg-black">
    <FaSpotify className="size-[36px] shrink-0 text-[#1ed760]" />
  </span>
);
const Telegram = () => (
  <span className="flex size-[32px] items-center justify-center rounded-full bg-white">
    <FaTelegram className="size-[33px] shrink-0 text-[#1e92cf]" />
  </span>
);
const Zoom = () => (
  <span className="flex size-9 items-center justify-center rounded-[13px] bg-[#0b5cff] pb-[2px] text-[12px] font-semibold text-white">
    <T w={25}>zoom</T>
  </span>
);
const Discord = () => (
  <span className="flex size-9 items-center justify-center rounded-full bg-[#5865f2]">
    <FaDiscord className="size-[24px] text-white" />
  </span>
);
const Sticky = () => (
  <svg viewBox="0 0 32 32" className="size-8">
    <path d="M0 0h32v16L16 32H0z" fill="#3f3f3f" />
    <path d="M16 16h16v16H16z" fill="#333" />
    <path d="M16 16h16L16 32z" fill="#ffd60a" />
  </svg>
);
const Postman = () => (
  <span className="flex size-[34px] items-center justify-center rounded-full bg-white">
    <SiPostman className="size-[36px] shrink-0 text-[#ff6c37]" />
  </span>
);

type App = { icon: ReactNode; dot?: "gray" | "red" | "active"; badge?: ReactNode; bg?: string };

const apps: App[] = [
  { icon: <TaskView /> },
  { icon: <Folder />, dot: "gray" },
  { icon: <LApp /> },
  { icon: <Edge />, dot: "gray" },
  { icon: <Word />, dot: "gray" },
  {
    icon: <Chrome />,
    dot: "active",
    bg: "bg-[#f8f8f8] border-2 border-[#e2e2e2]",
    badge: (
      <span className="absolute left-[35px] top-[9px] flex size-6 items-center justify-center rounded-full bg-[#06897b] text-[13px] font-semibold text-[#b9dfda]">
        T
      </span>
    ),
  },
  {
    icon: <WhatsApp />,
    dot: "gray",
    badge: (
      <span className="absolute left-[26px] top-[9px] flex h-6 w-10 items-center justify-center rounded-full bg-[#268292] text-[16px] text-white">
        <T w={28}>99+</T>
      </span>
    ),
  },
  { icon: <VsCode />, dot: "gray" },
  { icon: <Spotify />, dot: "gray" },
  {
    icon: <Telegram />,
    dot: "gray",
    badge: (
      <span className="absolute left-[36px] top-[17px] flex h-[16px] w-[22px] items-center justify-center rounded-[4px] bg-[#f44336] text-[13px] text-white">
        <T w={18}>..89</T>
      </span>
    ),
  },
  { icon: <Zoom />, dot: "gray" },
  {
    icon: <Discord />,
    dot: "red",
    bg: "bg-[#fde6e8]",
    badge: (
      <span className="absolute left-[37px] top-[10px] flex size-[21px] items-center justify-center rounded-full bg-[#ee5555] text-[14px] font-bold text-white">
        <T w={17}>9+</T>
      </span>
    ),
  },
  { icon: <Sticky />, dot: "gray" },
  { icon: <Postman />, dot: "gray" },
];

const dotClass = {
  gray: "w-[9px] bg-[#858585]",
  red: "w-[9px] bg-[#c42b1c]",
  active: "w-[24px] bg-[#268292]",
};

function Taskbar() {
  return (
    <div className="flex h-[72px] border-t-2 border-[#bdbdbd] bg-[#eeeeee] text-[#1b1b1b]">
      <div className="relative w-[260px]">
        <svg viewBox="0 0 36 33" className="absolute left-[15px] top-[16px] h-[33px] w-9">
          <defs>
            <linearGradient id="sun" x1="0" y1="0" x2="1" y2="1">
              <stop stopColor="#f4b52c" />
              <stop offset="1" stopColor="#f3640f" />
            </linearGradient>
            <linearGradient id="cloud" x1="0" y1="0" x2="0" y2="1">
              <stop stopColor="#7ea0e2" />
              <stop offset="1" stopColor="#cfdff8" />
            </linearGradient>
          </defs>
          <circle cx="18" cy="18" r="15" fill="url(#sun)" />
          <path d="M4 14a4 4 0 0 1 0-7.500 7 7 0 0 1 12-1V14z" fill="url(#cloud)" />
          <path d="M18 32a4 4 0 0 1 0-7.500 6 6 0 0 1 12-1 4.300 4.300 0 0 1 2 8.500z" fill="url(#cloud)" />
        </svg>
        <span className="absolute left-[27px] top-[8px] flex h-6 w-[35px] items-center justify-center rounded-full bg-[#fafafa]/90 text-[17px]">
          <T w={24}>92°</T>
        </span>
      </div>
      <svg viewBox="0 0 35 35" className="mt-[17px] size-[35px]">
        <defs>
          <linearGradient id="win" gradientUnits="userSpaceOnUse" x1="0" y1="0" x2="30" y2="35">
            <stop stopColor="#4fd0ff" />
            <stop offset="1" stopColor="#0372d2" />
          </linearGradient>
        </defs>
        <path d="M0 1.500Q0 0 1.500 0H17v17H0zM18 0h15.500Q35 0 35 1.500V17H18zM0 18h17v17H1.500Q0 35 0 33.500zM18 18h17v15.500q0 1.500-1.500 1.500H18z" fill="url(#win)" />
      </svg>
      <div className="ml-[20px] mt-[10px] flex h-[48px] w-[329px] items-center rounded-full border-2 border-[#dedede] border-b-[#c4c4c4] bg-[#fafafa]">
        <svg viewBox="0 0 24 24" className="ml-[15px] size-6" fill="none" stroke="#202020" strokeWidth="2.300">
          <circle cx="10.500" cy="10" r="8.500" />
          <path d="m16.500 16.500 6 6" strokeWidth="3" />
        </svg>
        <T w={62} className="ml-[14px] pt-px text-[20px] text-[#616161]">Search</T>
        <svg viewBox="0 0 32 32" className="ml-auto mr-[5px] size-[31px]">
          <defs>
            <linearGradient id="bing" x1="0" y1="1" x2="1" y2="0">
              <stop stopColor="#1049c5" />
              <stop offset=".6" stopColor="#1ba0f0" />
              <stop offset="1" stopColor="#2cc9dd" />
            </linearGradient>
          </defs>
          <path d="M2 30V16a14 14 0 1 1 14 14q-3 0-6-1.500z" fill="#f4faff" stroke="url(#bing)" strokeWidth="2" />
          <path d="m11 6.500 3.500 1.500v11L11 22zM16 13l6 3q1.800 1.800 0 4l-6 4q-4 1-5-2.500l6-3z" fill="url(#bing)" />
        </svg>
      </div>
      <div className="ml-[4px] flex">
        {apps.map((app, i) => (
          <div key={i} className="relative w-[66px]">
            {app.bg && <div className={`absolute left-[4px] top-[5px] h-[60px] w-[58px] rounded-[7px] ${app.bg}`} />}
            <div className="relative flex h-[69px] items-center justify-center">{app.icon}</div>
            {app.badge}
            {app.dot && (
              <div className="absolute inset-x-0 top-[58px] flex justify-center">
                <span className={`h-[5px] rounded-full ${dotClass[app.dot]}`} />
              </div>
            )}
          </div>
        ))}
      </div>
      <div className="ml-auto flex items-center pr-[30px]">
        <svg width="18" height="12" fill="none" stroke="#1b1b1b" strokeWidth="1.800">
          <path d="m1.500 10.500 7.500-8 7.500 8" />
        </svg>
        <Wifi className="ml-[26px] size-[26px]" strokeWidth={1.800} />
        <svg viewBox="0 0 26 24" className="ml-[11px] h-6 w-[26px]" fill="none" stroke="#1b1b1b" strokeWidth="1.800">
          <path d="M1.500 8.500h4L11 3v18l-5.500-5.500h-4zM14 9q2 3 0 6M17.500 6q4 6 0 12M20.500 3q6.500 9 0 18" strokeLinejoin="round" />
        </svg>
        <svg viewBox="0 0 26 24" className="ml-[10px] h-6 w-[26px]" fill="none" stroke="#1b1b1b" strokeWidth="2">
          <path d="M13 6h9v13H5M24.500 10v5" strokeLinejoin="round" />
          <path d="M1.500 9Q3 3 10 1v9q-1 5-6 5-3-1-2.500-6" fill="#1b1b1b" stroke="none" />
          <path d="M6 9 1.500 19" />
        </svg>
        <div className="ml-[19px] flex w-[88px] flex-col items-end text-[17px] leading-[24px]">
          <T w={63}>3:16 PM</T>
          <T w={82}>9/18/2023</T>
        </div>
        <span className="ml-[10px] flex size-6 items-center justify-center rounded-full bg-[#268292] text-[15px] text-white">7</span>
      </div>
    </div>
  );
}

export default function App() {
  return (
    <div className="relative flex h-[1080px] w-[1920px] flex-col overflow-hidden bg-[#2e2e2e] font-['Open_Sans',sans-serif]">
      <TabStrip />
      <Toolbar />
      <Bookmarks />
      <AppHeader />
      <div className="flex h-[772px] overflow-hidden">
        <Sidebar />
        <Scrollbar before="h-[50px]" thumb="h-[673px]" up="fill-[#505050]" down="fill-[#a3a3a3]" />
        <Main />
        <Details />
        <Scrollbar before="h-0" thumb="h-[602px]" up="fill-[#a3a3a3]" down="fill-[#505050]" />
      </div>
      <Taskbar />
      <div className="pointer-events-none absolute left-[1498px] top-[892px] flex flex-col items-start text-[#a0a0a0]/85">
        <T w={236} className="text-[29px] leading-[40px]">Activate Windows</T>
        <T w={343} className="text-[21px] leading-[32px]">Go to Settings to activate Windows.</T>
      </div>
    </div>
  );
}
